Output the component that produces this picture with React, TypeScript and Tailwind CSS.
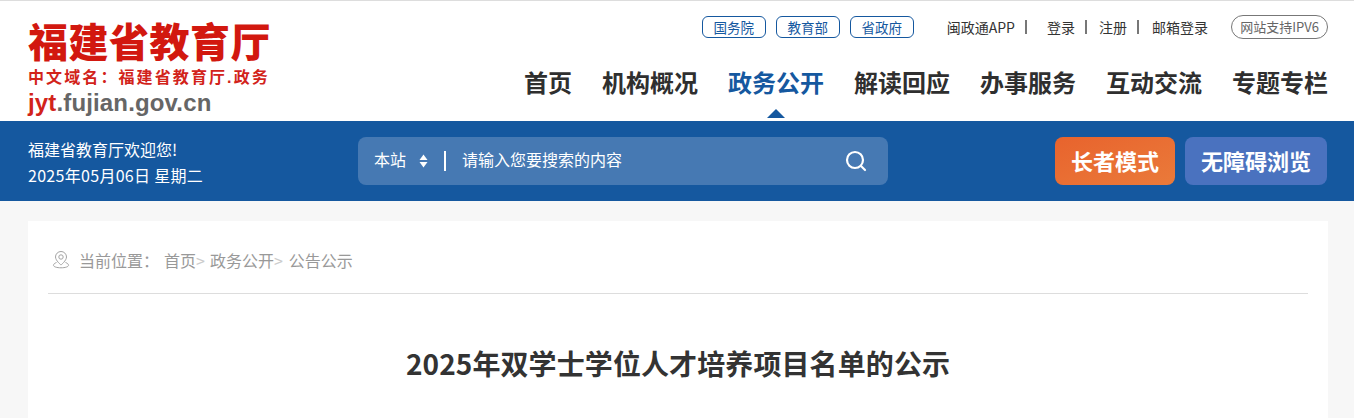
import React from "react";

const govLinks = ["国务院", "教育部", "省政府"];
const navItems = ["首页", "机构概况", "政务公开", "解读回应", "办事服务", "互动交流", "专题专栏"];
const cjk = "font-['Noto_Sans_CJK_SC',sans-serif]";

function Logo() {
  return (
    <div className="ml-[28px] flex w-[260px] flex-col pt-[20px] font-['Liberation_Sans','Noto_Sans_CJK_SC',sans-serif]">
      <div className="h-[44px] whitespace-nowrap text-[40px] leading-[44px] font-black tracking-[0.5px] text-[#d2180f]">
        福建省教育厅
      </div>
      <div className="mt-[2px] h-[22px] whitespace-nowrap text-[16px] leading-[22px] font-bold tracking-[2.1px] text-[#d2231a]">
        中文域名：福建省教育厅.政务
      </div>
      <div className="h-[28px] whitespace-nowrap text-[24px] leading-[28px] font-bold tracking-[0.15px] text-[#666666]">
        <span className="text-[#d2231a]">jyt</span>.fujian.gov.cn
      </div>
    </div>
  );
}

function TopLinks() {
  return (
    <div className="flex h-[22px] items-center text-[14px] leading-[22px]">
      <div className="flex gap-[10px]">
        {govLinks.map((t) => (
          <span
            key={t}
            className="flex h-[22px] w-[64px] items-center justify-center rounded-[6px] border border-[#15589f] text-[13.5px] text-[#15589f]"
          >
            {t}
          </span>
        ))}
      </div>
      <span className="ml-[33px] text-[#333333]">闽政通APP</span>
      <span className="ml-[10px] h-[14px] w-[2px] bg-[#777777]" />
      <span className="ml-[20px] text-[#333333]">登录</span>
      <span className="ml-[10px] h-[14px] w-[2px] bg-[#777777]" />
      <span className="ml-[12px] text-[#333333]">注册</span>
      <span className="ml-[10px] h-[14px] w-[2px] bg-[#777777]" />
      <span className="ml-[13px] text-[#333333]">邮箱登录</span>
      <span className="ml-[23px] flex h-[24px] w-[97px] items-center justify-center rounded-full border border-[#777777] text-[13px] text-[#666666]">
        网站支持IPV6
      </span>
    </div>
  );
}

function Nav() {
  return (
    <nav className="mt-[26px] flex h-[36px] gap-[30px] text-[24px] leading-[36px] font-bold text-[#2f2f2f]">
      {navItems.map((t) => (
        <span key={t} className={t === "政务公开" ? "relative text-[#15589f]" : ""}>
          {t}
          {t === "政务公开" && (
            <span className="absolute top-[45px] left-1/2 h-0 w-0 -translate-x-1/2 border-x-[9px] border-b-[9px] border-x-transparent border-b-[#15589f]" />
          )}
        </span>
      ))}
    </nav>
  );
}

function SearchBar() {
  return (
    <div className="ml-[155px] flex h-[48px] w-[530px] items-center rounded-[8px] bg-[#4679b3] pl-[16px] text-[16px] text-white">
      <span className="pb-[4px] leading-[22px]">本站</span>
      <svg className="ml-[13px]" width="9" height="14" viewBox="0 0 9 14" fill="#ffffff">
        <path d="M4.500 0.500 8.500 6H0.500z" />
        <path d="M0.500 8h8l-4 5.500z" />
      </svg>
      <span className="ml-[16px] h-[20px] w-[2px] bg-white" />
      <span className="ml-[16px] flex-1 pb-[4px] text-[16px] leading-[22px]">请输入您要搜索的内容</span>
      <svg className="mr-[21px]" width="22" height="22" viewBox="0 0 22 22" fill="none" stroke="#ffffff" strokeWidth="2.2">
        <circle cx="10" cy="10" r="8" />
        <path d="M16 16l4 4" strokeLinecap="round" />
      </svg>
    </div>
  );
}

export default function App() {
  return (
    <div className={`h-[418px] w-[1354px] overflow-hidden bg-[#f7f7f7] ${cjk}`}>
      <header className="flex h-[121px] justify-between border-t border-[#dddddd] bg-white">
        <Logo />
        <div className="mr-[26px] flex flex-col items-end pt-[15px]">
          <TopLinks />
          <Nav />
        </div>
      </header>

      <div className="flex h-[80px] items-center bg-[#15589f] text-white">
        <div className="ml-[28px] w-[175px] pt-[2px] text-[16px] leading-[26px]">
          <div>福建省教育厅欢迎您!</div>
          <div className="whitespace-nowrap tracking-[0.3px]">2025年05月06日 星期二</div>
        </div>
        <SearchBar />
        <div className="ml-[167px] flex gap-[10px] text-[22px] font-bold">
          <span className="flex h-[48px] w-[120px] items-center justify-center rounded-[8px] bg-gradient-to-br from-[#e8632d] to-[#ea7a3a] pb-[2px]">
            长者模式
          </span>
          <span className="flex h-[48px] w-[142px] items-center justify-center rounded-[8px] bg-[#4a72bf] pb-[2px]">
            无障碍浏览
          </span>
        </div>
      </div>

      <main className="mx-[28px] mt-[20px] h-[300px] w-[1300px] bg-white px-[20px]">
        <div className="flex h-[73px] items-center border-b border-[#dddddd] pt-[5px] text-[16px] text-[#999999]">
          <svg className="ml-[4px]" width="18" height="19" viewBox="0 0 18 19" fill="none" stroke="#a3a3a3" strokeWidth="1">
            <path d="M9 1.500a5.500 5.500 0 0 0-5.500 5.500c0 3.500 5.500 8 5.500 8s5.500-4.500 5.500-8A5.500 5.500 0 0 0 9 1.500z" />
            <circle cx="9" cy="7" r="2.200" />
            <path d="M4.500 12.500C2.500 13.200 1.500 14.200 1.500 15.300c0 1.500 3.300 2.500 7.500 2.500s7.500-1 7.500-2.500c0-1.100-1-2.100-3-2.800" />
          </svg>
          <span className="ml-[9px]">当前位置：</span>
          <span className="ml-[5px]">首页</span>
          <span className="text-[#cccccc]">&gt;</span>
          <span className="ml-[5px]">政务公开</span>
          <span className="text-[#cccccc]">&gt;</span>
          <span className="ml-[6px]">公告公示</span>
        </div>
        <h1 className="mt-[48px] text-center text-[28px] leading-[42px] font-bold tracking-[0.1px] text-[#333333]">
          2025年双学士学位人才培养项目名单的公示
        </h1>
      </main>
    </div>
  );
}
